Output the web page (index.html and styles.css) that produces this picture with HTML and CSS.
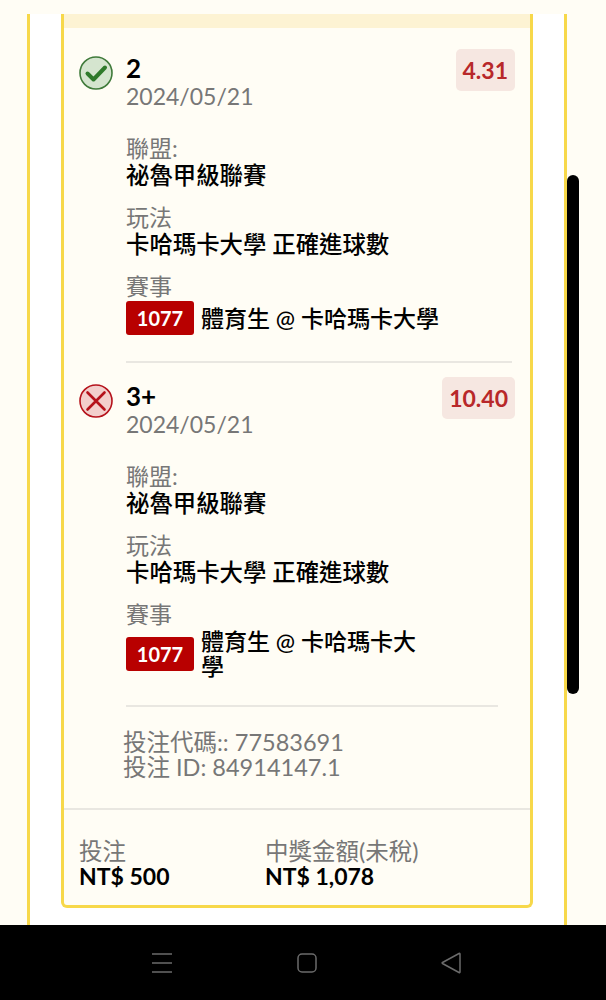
FILE: index.html
```html
<!DOCTYPE html>
<html>

<head>
    <meta charset="utf-8">
    <link rel="stylesheet" href="styles.css">
</head>

<body>
    <div class="screen">
        <div class="panel">
            <div class="card">
                <div class="card-band"></div>

                <!-- first leg -->
                <div class="leg">
                    <div class="leg-head">
                        <svg class="status" viewBox="0 0 34 34">
                            <circle cx="17" cy="17" r="16" fill="#d5e5cf" stroke="#3f7a3a" stroke-width="1.6" />
                            <path d="M8.5 17.500l6 6L26 11.500" fill="none" stroke="#2f7a2b" stroke-width="4" stroke-linecap="round" stroke-linejoin="round" />
                        </svg>
                        <div class="pick">
                            <div class="pick-name">2</div>
                            <div class="pick-date">2024/05/21</div>
                        </div>
                        <div class="odds">4.31</div>
                    </div>
                    <div class="info">
                        <div class="label">聯盟:</div>
                        <div class="value">祕魯甲級聯賽</div>
                    </div>
                    <div class="info">
                        <div class="label">玩法</div>
                        <div class="value">卡哈瑪卡大學 正確進球數</div>
                    </div>
                    <div class="info">
                        <div class="label">賽事</div>
                        <div class="event">
                            <span class="event-no">1077</span>
                            <span class="teams">體育生 @ 卡哈瑪卡大學</span>
                        </div>
                    </div>
                    <div class="rule"></div>
                </div>

                <!-- second leg -->
                <div class="leg leg-lost">
                    <div class="leg-head">
                        <svg class="status" viewBox="0 0 34 34">
                            <circle cx="17" cy="17" r="16" fill="#f3cfcc" stroke="#b5121b" stroke-width="1.6" />
                            <path d="M8.5 8.500l17 17M25.500 8.500l-17 17" fill="none" stroke="#b5121b" stroke-width="2.6" stroke-linecap="round" />
                        </svg>
                        <div class="pick">
                            <div class="pick-name">3+</div>
                            <div class="pick-date">2024/05/21</div>
                        </div>
                        <div class="odds">10.40</div>
                    </div>
                    <div class="info">
                        <div class="label">聯盟:</div>
                        <div class="value">祕魯甲級聯賽</div>
                    </div>
                    <div class="info">
                        <div class="label">玩法</div>
                        <div class="value">卡哈瑪卡大學 正確進球數</div>
                    </div>
                    <div class="info">
                        <div class="label">賽事</div>
                        <div class="event">
                            <span class="event-no">1077</span>
                            <span class="teams">體育生 @ 卡哈瑪卡大學</span>
                        </div>
                    </div>
                    <div class="rule"></div>
                </div>

                <div class="codes">
                    <div class="code">投注代碼:: 77583691</div>
                    <div class="code">投注 ID: 84914147.1</div>
                </div>

                <div class="totals">
                    <div class="total">
                        <div class="total-label">投注</div>
                        <div class="total-value">NT$ 500</div>
                    </div>
                    <div class="total">
                        <div class="total-label">中獎金額(未稅)</div>
                        <div class="total-value">NT$ 1,078</div>
                    </div>
                </div>
            </div>
        </div>
        <div class="scrollbar"></div>
    </div>

    <div class="navbar">
        <svg class="nav-icon" viewBox="0 0 22 22">
            <path d="M1 2h20M1 11h20M1 20h20" fill="none" stroke="#6b6b6b" stroke-width="1.5" />
        </svg>
        <svg class="nav-icon" viewBox="0 0 22 22">
            <rect x="2" y="2" width="18" height="18" rx="4" fill="none" stroke="#6b6b6b" stroke-width="1.5" />
        </svg>
        <svg class="nav-icon" viewBox="0 0 22 22">
            <path d="M20 2v18q0 1-1 .5L2.500 11.500q-.8-.5 0-1L19 1.500q1-.5 1 .5z" fill="none" stroke="#6b6b6b" stroke-width="1.5" />
        </svg>
    </div>
</body>

</html>
```

FILE: styles.css
```css
* {
    box-sizing: border-box;
}

body {
    margin: 0;
    width: 606px;
    height: 1000px;
    overflow: hidden;
    background-color: #fffdf5;
    font-family: "Lato", "Noto Sans CJK TC", sans-serif;
    color: #000;
}

.screen {
    position: relative;
    height: 925px;
    padding: 14px 39px 0 27px;
}

.panel {
    height: 911px;
    padding: 0 31px;
    background-color: #fff;
    border-left: 3px solid #f7d84a;
    border-right: 3px solid #f7d84a;
}

.card {
    height: 894px;
    background-color: #fffdf5;
    border: 3px solid #f7d84a;
    border-top: none;
    border-radius: 0 0 6px 6px;
}

.card-band {
    height: 14px;
    background-color: #fdf3d3;
}

.leg {
    padding: 21px 15px 0 15px;
}

.leg-lost {
    padding-top: 14px;
}

.leg-head {
    display: flex;
    align-items: flex-start;
}

.status {
    width: 34px;
    height: 34px;
    margin-top: 7px;
    margin-right: 13px;
    flex-shrink: 0;
}

.pick {
    flex: 1;
}

.pick-name {
    font-size: 26px;
    font-weight: 700;
    line-height: 28px;
    margin-top: 5px;
}

.pick-date {
    font-size: 23px;
    line-height: 28px;
    color: #777;
}

.odds {
    padding: 0 7px;
    height: 42px;
    line-height: 42px;
    font-size: 23px;
    font-weight: 700;
    color: #b8282a;
    background-color: #f6e7e1;
    border-radius: 5px;
}

.info {
    margin: 0 0 15px 47px;
}

.leg-head + .info {
    margin-top: 25px;
}

.label {
    font-size: 23px;
    line-height: 27px;
    color: #777;
}

.value {
    font-size: 23.4px;
    font-weight: 500;
    line-height: 27px;
}

.event {
    display: flex;
    align-items: center;
    margin-top: 1px;
}

.event-no {
    width: 68px;
    height: 34px;
    line-height: 34px;
    margin-right: 7px;
    flex-shrink: 0;
    text-align: center;
    font-size: 20px;
    font-weight: 700;
    color: #fff;
    background-color: #b80000;
    border-radius: 3px;
}

.teams {
    font-size: 23px;
    font-weight: 500;
    line-height: 25px;
    max-width: 250px;
}

.leg-lost .teams {
    max-width: 226px;
}

.rule {
    height: 2px;
    margin: 26px 3px 0 47px;
    background-color: #e9e7e1;
}

.leg-lost .rule {
    margin-right: 17px;
}

.codes {
    padding: 23px 0 0 59px;
}

.code {
    font-size: 23.5px;
    line-height: 25px;
    color: #777;
}

.totals {
    display: flex;
    margin-top: 28px;
    padding: 29px 0 0 15px;
    border-top: 2px solid #e9e7e1;
}

.total {
    width: 186px;
}

.total-label {
    font-size: 23.5px;
    line-height: 25px;
    color: #777;
}

.total-value {
    font-size: 23px;
    font-weight: 700;
    line-height: 25px;
}

.scrollbar {
    position: absolute;
    top: 175px;
    left: 567px;
    width: 12px;
    height: 519px;
    background-color: #000;
    border-radius: 6px;
}

.navbar {
    display: flex;
    align-items: center;
    height: 75px;
    padding: 0 144px 0 151px;
    justify-content: space-between;
    background-color: #000;
}

.nav-icon {
    width: 22px;
    height: 22px;
}
```
